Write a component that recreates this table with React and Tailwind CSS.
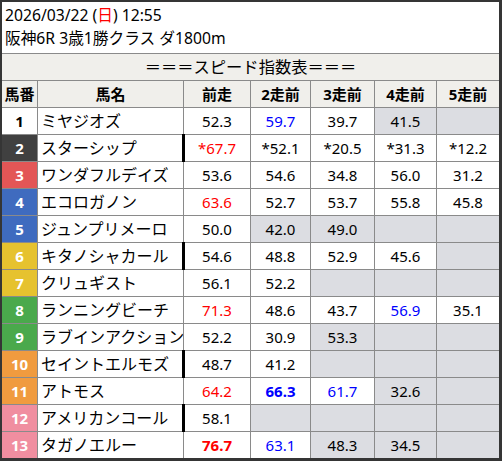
import React from "react";

const R = "text-[#ff0000]";
const B = "text-[#0000ff]";

const rows = [
  { n: "1", name: "ミヤジオズ", num: "bg-white text-black", bar: false, cells: [{ v: "52.3" }, { v: "59.7", c: B }, { v: "39.7" }, { v: "41.5", g: true }, { g: true }] },
  { n: "2", name: "スターシップ", num: "bg-[#404040] text-white", bar: true, cells: [{ v: "*67.7", c: R }, { v: "*52.1" }, { v: "*20.5" }, { v: "*31.3" }, { v: "*12.2" }] },
  { n: "3", name: "ワンダフルデイズ", num: "bg-[#e35656] text-white", bar: false, cells: [{ v: "53.6" }, { v: "54.6" }, { v: "34.8" }, { v: "56.0" }, { v: "31.2" }] },
  { n: "4", name: "エコロガノン", num: "bg-[#3f6bbf] text-white", bar: false, cells: [{ v: "63.6", c: R }, { v: "52.7" }, { v: "53.7" }, { v: "55.8" }, { v: "45.8" }] },
  { n: "5", name: "ジュンプリメーロ", num: "bg-[#3f6bbf] text-white", bar: false, cells: [{ v: "50.0" }, { v: "42.0", g: true }, { v: "49.0", g: true }, { g: true }, { g: true }] },
  { n: "6", name: "キタノシャカール", num: "bg-[#e6c22f] text-white", bar: true, cells: [{ v: "54.6" }, { v: "48.8" }, { v: "52.9" }, { v: "45.6" }, { g: true }] },
  { n: "7", name: "クリュギスト", num: "bg-[#e6c22f] text-white", bar: false, cells: [{ v: "56.1" }, { v: "52.2" }, { g: true }, { g: true }, { g: true }] },
  { n: "8", name: "ランニングビーチ", num: "bg-[#4aa94c] text-white", bar: false, cells: [{ v: "71.3", c: R }, { v: "48.6" }, { v: "43.7" }, { v: "56.9", c: B }, { v: "35.1" }] },
  { n: "9", name: "ラブインアクション", num: "bg-[#4aa94c] text-white", bar: false, cells: [{ v: "52.2" }, { v: "30.9" }, { v: "53.3", g: true }, { g: true }, { g: true }] },
  { n: "10", name: "セイントエルモズ", num: "bg-[#f09b3f] text-white", bar: true, cells: [{ v: "48.7" }, { v: "41.2" }, { g: true }, { g: true }, { g: true }] },
  { n: "11", name: "アトモス", num: "bg-[#f09b3f] text-white", bar: false, cells: [{ v: "64.2", c: R }, { v: "66.3", c: B, b: true }, { v: "61.7", c: B }, { v: "32.6", g: true }, { g: true }] },
  { n: "12", name: "アメリカンコール", num: "bg-[#f08ea0] text-white", bar: true, cells: [{ v: "58.1" }, { g: true }, { g: true }, { g: true }, { g: true }] },
  { n: "13", name: "タガノエルー", num: "bg-[#f08ea0] text-white", bar: false, cells: [{ v: "76.7", c: R, b: true }, { v: "63.1", c: B }, { v: "48.3", g: true }, { v: "34.5", g: true }, { g: true }] },
];

const heads = ["馬番", "馬名", "前走", "2走前", "3走前", "4走前", "5走前"];

export default function App() {
  return (
    <div
      className="w-[502px] h-[461px] bg-white border-l-2 border-t-2 border-r-[3px] border-b-[3px] border-[#353535] text-black overflow-hidden"
      style={{ fontFamily: '"Noto Sans", "Noto Sans CJK JP", sans-serif' }}
    >
      <div className="h-[51px] pl-[3px] pt-[2px] text-[15.7px] leading-[23px]">
        <div>
          2026/03/22 (<span className="text-[#ff0000]">日</span>) 12:55
        </div>
        <div>阪神6R 3歳1勝クラス ダ1800m</div>
      </div>
      <div className="grid grid-cols-[35px_145px_66px_59px_63px_61px_62px] gap-px bg-[#8a8a8a] pt-px">
        <div className="col-span-7 h-[26px] bg-[#f0efeb] flex items-center justify-center text-[16.3px]">
          ＝＝＝スピード指数表＝＝＝
        </div>
        {heads.map((h) => (
          <div key={h} className="h-[26px] bg-[#f0efeb] flex items-center justify-center text-[15px] font-bold">
            {h}
          </div>
        ))}
        {rows.map((r) => (
          <React.Fragment key={r.n}>
            <div className={`h-[26px] flex items-center justify-center text-[15px] font-bold ${r.num}`}>{r.n}</div>
            <div className="h-[26px] bg-white flex items-center pl-[3px] text-[16px] whitespace-nowrap overflow-hidden">{r.name}</div>
            {r.cells.map((c, i) => (
              <div
                key={i}
                className={`relative h-[26px] flex items-center justify-center text-[15px] ${c.g ? "bg-[#dcdde2]" : "bg-white"} ${c.c || "text-black"} ${c.b ? "font-bold" : ""}`}
              >
                {i === 0 && r.bar ? <span className="absolute -left-[2px] -top-px -bottom-px w-[3px] bg-black" /> : null}
                {c.v || ""}
              </div>
            ))}
          </React.Fragment>
        ))}
      </div>
    </div>
  );
}
